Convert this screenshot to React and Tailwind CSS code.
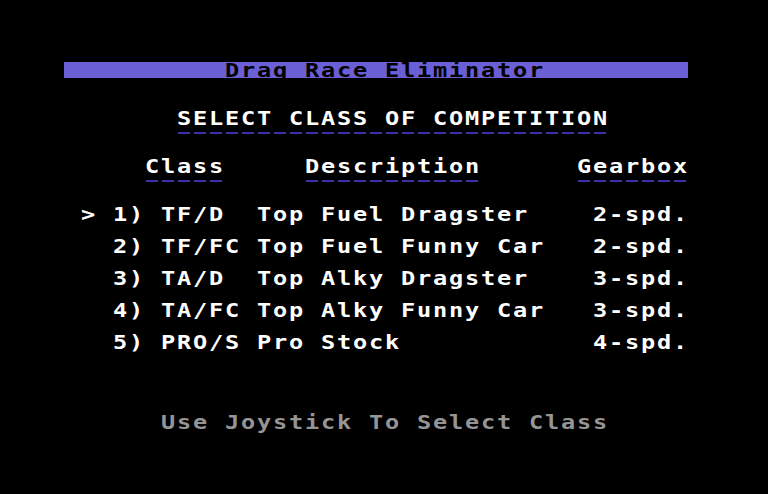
import React from "react";

// 40-column character screen, every cell 16x16
const font = { fontFamily: '"DejaVu Sans Mono", "Liberation Mono", monospace' };

const Row = ({ text, className = "" }) => (
  <div className={`flex h-4 ${className}`}>
    {text.split("").map((ch, i) => (
      <span
        key={i}
        className="w-4 h-4 shrink-0 text-center text-[20px] leading-4 font-bold whitespace-pre scale-x-[1.18]"
      >
        {ch}
      </span>
    ))}
  </div>
);

// underline row: a short dash under each marked cell
const Dashes = ({ pattern }) => (
  <div className="flex h-4">
    {pattern.split("").map((ch, i) => (
      <span key={i} className="w-4 h-4 shrink-0 pt-[6px] px-[2px]">
        {ch === "-" && <span className="block h-[2px] bg-[#3d31a6]" />}
      </span>
    ))}
  </div>
);

const Gap = ({ rows = 1 }) => <div style={{ height: rows * 16 }} />;

const classes = [
  " > 1) TF/D  Top Fuel Dragster    2-spd.",
  "   2) TF/FC Top Fuel Funny Car   2-spd.",
  "   3) TA/D  Top Alky Dragster    3-spd.",
  "   4) TA/FC Top Alky Funny Car   3-spd.",
  "   5) PRO/S Pro Stock            4-spd.",
];

export default function App() {
  return (
    <div className="w-[768px] h-[494px] bg-black overflow-hidden pt-[62px] pl-[64px]" style={font}>
      <div className="w-[624px] text-white">
        <Row text="          Drag Race Eliminator         " className="bg-[#6b5fd5] text-black" />
        <Gap rows={2} />
        <Row text="       SELECT CLASS OF COMPETITION" />
        <Dashes pattern="       ---------------------------" />
        <Gap />
        <Row text="     Class     Description      Gearbox" />
        <Dashes pattern="     -----     -----------      -------" />
        <Gap />
        {classes.map((line) => (
          <div key={line}>
            <Row text={line} />
            <Gap />
          </div>
        ))}
        <Gap rows={3} />
        <Row text="      Use Joystick To Select Class" className="text-[#959595]" />
      </div>
    </div>
  );
}
